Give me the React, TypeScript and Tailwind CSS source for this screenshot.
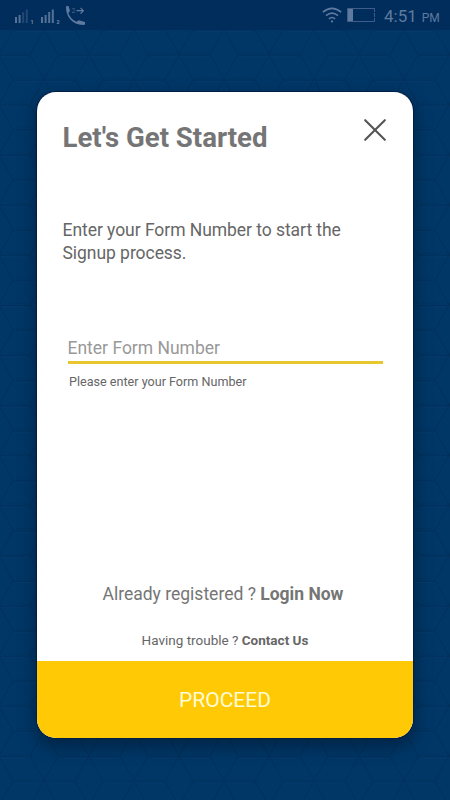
import React from "react";

function Background() {
  return (
    <svg className="absolute inset-0 h-full w-full" viewBox="0 0 450 800" fill="none" aria-hidden="true">
      <defs>
        <pattern id="mesh" x="-1" y="54.5" width="90" height="50.1" patternUnits="userSpaceOnUse">
          <g stroke="#02264d" strokeOpacity="0.42" strokeWidth="1.1">
            <path d="M0 0.5H31M59 0.5H90M14 25.5H76M0 0L14 25L0 50M90 0L76 25L90 50M31 0L45 25L59 0M31 50L45 25L59 50" />
          </g>
          <path d="M10 -2H29M61 -2H80M10 48.5H29M61 48.5H80M17 23H35M55 23H73" stroke="#02264d" strokeOpacity="0.2" />
          <path d="M0 2H27M63 2H90M18 27H72" stroke="#17477a" strokeOpacity="0.2" />
        </pattern>
      </defs>
      <rect y="30" width="450" height="770" fill="url(#mesh)" />
    </svg>
  );
}

function Signal({ sim, level }: { sim: string; level: number }) {
  return (
    <svg className="h-[18px] w-[20px]" viewBox="0 0 20 18" aria-hidden="true">
      {[6, 8, 11, 13.5].map((h, i) => (
        <rect key={h} x={i * 3.6} y={15 - h} width="2" height={h} fill="#7088aa" fillOpacity={i < level ? 0.75 : 0.3} />
      ))}
      <text x="15.5" y="16" fontSize="5.5" fontWeight="700" fill="#7088aa">{sim}</text>
    </svg>
  );
}

function StatusBar() {
  return (
    <header className="relative flex h-[30px] items-center justify-between bg-[#002d5c] pr-[10px] pl-[15px] text-[#5f7a9f]">
      <div className="flex items-center">
        <div className="flex gap-[6px] pt-[3px]">
          <Signal sim="1" level={2} />
          <Signal sim="2" level={4} />
        </div>
        <svg className="ml-[4px] h-[21px] w-[22px]" viewBox="0 0 22 21" fill="none" aria-hidden="true">
          <path d="M1 1.3L3.6 1L5 6L3.3 8C4.8 12 7.4 14.9 11.5 16.7L13.7 15.2L20 17V19.8C8.6 21 .4 12.4 1 1.3Z" fill="currentColor" />
          <text x="6.5" y="8.2" fontSize="7" fill="currentColor" opacity=".75">2</text>
          <path d="M11.5 5.7H18M15.5 2.8L18.4 5.7L15.5 8.6" stroke="currentColor" strokeWidth="1.2" />
        </svg>
      </div>
      <div className="flex items-center">
        <svg className="h-[18px] w-[20px]" viewBox="0 0 20 18" fill="none" stroke="currentColor" strokeWidth="1.6" aria-hidden="true">
          <path d="M.8 6.2Q10-1.5 19.2 6.2M4 9.7Q10 4.5 16 9.7M6.9 12.8Q10 10.2 13.1 12.8" />
          <circle cx="10" cy="15.4" r="1.1" fill="currentColor" stroke="none" />
        </svg>
        <svg className="ml-[5px] h-[14px] w-[28px]" viewBox="0 0 28 14" fill="none" stroke="currentColor" aria-hidden="true">
          <path d="M.5.5H27.5V4M27.5 10V13.5H.5V.5M27.5 5V9" opacity=".65" />
          <rect x="1" y="1" width="5" height="12" fill="currentColor" stroke="none" />
        </svg>
        <div className="ml-[9px] flex w-[56px] items-baseline pt-px whitespace-nowrap">
          <span className="text-[17px] leading-[22px]">4:51</span>
          <span className="ml-[5px] text-[12px]">PM</span>
        </div>
      </div>
    </header>
  );
}

export default function App() {
  return (
    <div className="relative h-[800px] w-[450px] overflow-hidden bg-[#003767] font-['Roboto',sans-serif]">
      <Background />
      <StatusBar />
      <main className="relative mt-[62px] ml-[37px] flex h-[646px] w-[376px] flex-col overflow-hidden rounded-[19px] bg-white text-[#666] shadow-[0_0_0_1px_#001e46,0_7px_16px_2px_rgba(0,20,40,0.5)]">
        <div className="flex justify-between pr-[27px] pl-[25.5px]">
          <h1 className="pt-[29px] text-[27.6px] leading-[34px] font-bold whitespace-nowrap text-[#757575]">Let's Get Started</h1>
          <button aria-label="Close" className="mt-[27px] h-[22px] w-[22px]">
            <svg viewBox="0 0 22 22" fill="none" stroke="#555" strokeWidth="2.1" strokeLinecap="round">
              <path d="M1.2 1.2L20.8 20.8M20.8 1.2L1.2 20.8" />
            </svg>
          </button>
        </div>
        <p className="mt-[64px] pl-[25.5px] text-[17.5px] leading-[23px] tracking-[-0.05px]">Enter your Form Number to start the<br />Signup process.</p>
        <div className="mt-[71px] ml-[30.5px] w-[315px]">
          <input placeholder="Enter Form Number" className="block h-[28px] w-full border-b-[3px] border-[#e8c62d] pt-px pb-[2px] text-[17.5px] leading-[22px] outline-none placeholder:text-[#999]" />
          <p className="mt-[8px] ml-[1.5px] text-[12.6px] leading-[20px]">Please enter your Form Number</p>
        </div>
        <div className="mt-auto flex flex-col items-center">
          <p className="-ml-[4px] text-[17.5px] leading-[24px] whitespace-nowrap text-[#757575]">Already registered ? <b>Login Now</b></p>
          <p className="mt-[24px] text-[13.5px] leading-[20px] whitespace-nowrap">Having trouble ? <b>Contact Us</b></p>
        </div>
        <button className="mt-[11px] h-[77px] shrink-0 bg-[#ffca05] pt-[2px] text-[21px] text-[#fffbd5]">PROCEED</button>
      </main>
    </div>
  );
}
